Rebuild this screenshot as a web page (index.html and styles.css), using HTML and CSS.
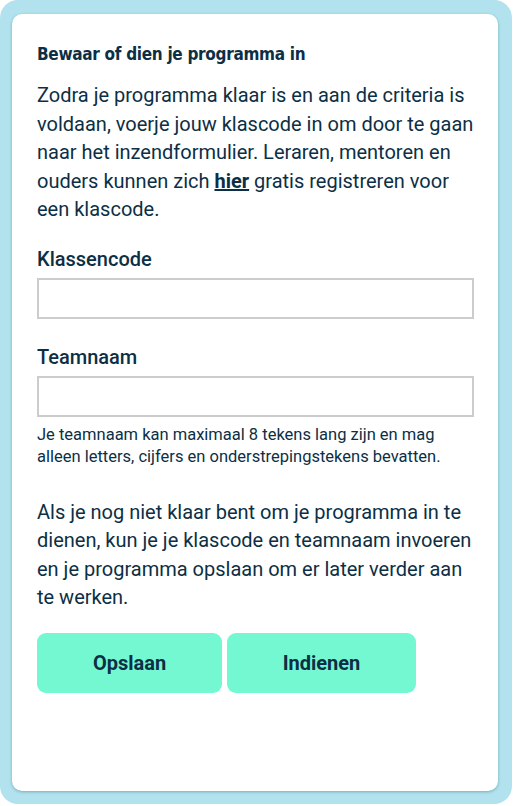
FILE: index.html
```html
<!DOCTYPE html>
<html lang="nl">
<head>
<meta charset="utf-8">
<link rel="stylesheet" href="styles.css">
</head>
<body>
<div class="frame">
  <div class="card">
    <h2 class="title">Bewaar of dien je programma in</h2>
    <p class="text">Zodra je programma klaar is en aan de criteria is voldaan, voerje jouw klascode in om door te gaan naar het inzendformulier. Leraren, mentoren en ouders kunnen zich <a class="link" href="#">hier</a> gratis registreren voor een klascode.</p>
    <div class="field field-first">
      <label class="label">Klassencode</label>
      <input class="input" type="text">
    </div>
    <div class="field field-second">
      <label class="label">Teamnaam</label>
      <input class="input" type="text">
      <p class="hint">Je teamnaam kan maximaal 8 tekens lang zijn en mag alleen letters, cijfers en onderstrepingstekens bevatten.</p>
    </div>
    <p class="text text-second">Als je nog niet klaar bent om je programma in te dienen, kun je je klascode en teamnaam invoeren en je programma opslaan om er later verder aan te werken.</p>
    <div class="buttons">
      <button class="btn btn-save">Opslaan</button>
      <button class="btn btn-submit">Indienen</button>
    </div>
  </div>
</div>
</body>
</html>
```
FILE: styles.css
```css
html, body {
  margin: 0;
  padding: 0;
  background: #ffffff;
}
body {
  font-family: Roboto, "Liberation Sans", sans-serif;
  color: #0c2f45;
}
.frame {
  width: 512px;
  height: 804px;
  box-sizing: border-box;
  background: #b1e2ed;
  border-radius: 18px;
  padding: 14px 14px 13px 12px;
}
.card {
  height: 100%;
  box-sizing: border-box;
  background: #ffffff;
  border-radius: 10px;
  box-shadow: 0 1px 3px rgba(40, 110, 130, 0.45);
  padding: 28px 24px 0 25px;
}
.title {
  margin: 0;
  font-family: "DejaVu Sans Condensed", "DejaVu Sans", sans-serif;
  font-stretch: condensed;
  font-weight: 700;
  font-size: 17px;
  letter-spacing: -0.3px;
  line-height: 24px;
  color: #0c2f45;
}
.text {
  margin: 15px 0 0;
  font-size: 20px;
  line-height: 28.5px;
}
.link {
  color: #0c2f45;
  font-weight: 700;
  text-decoration: underline;
}
.field {
  display: flex;
  flex-direction: column;
}
.field-first {
  margin-top: 23px;
}
.field-second {
  margin-top: 26px;
}
.label {
  font-size: 20px;
  font-weight: 500;
  line-height: 24px;
  margin-bottom: 7px;
}
.input {
  height: 41px;
  box-sizing: border-box;
  border: 2px solid #cccccc;
  border-radius: 0;
  margin: 0;
  width: 437px;
  font-size: 16px;
}
.hint {
  margin: 7px 0 0;
  font-size: 16.5px;
  line-height: 22px;
}
.text-second {
  margin-top: 30px;
}
.buttons {
  display: flex;
  gap: 5px;
  margin-top: 21px;
}
.btn {
  height: 60px;
  border: none;
  border-radius: 9px;
  background: #73f8d1;
  color: #0c2f45;
  font-family: Roboto, "Liberation Sans", sans-serif;
  font-weight: 700;
  font-size: 20px;
}
.btn-save { width: 185px; }
.btn-submit { width: 189px; }
```
